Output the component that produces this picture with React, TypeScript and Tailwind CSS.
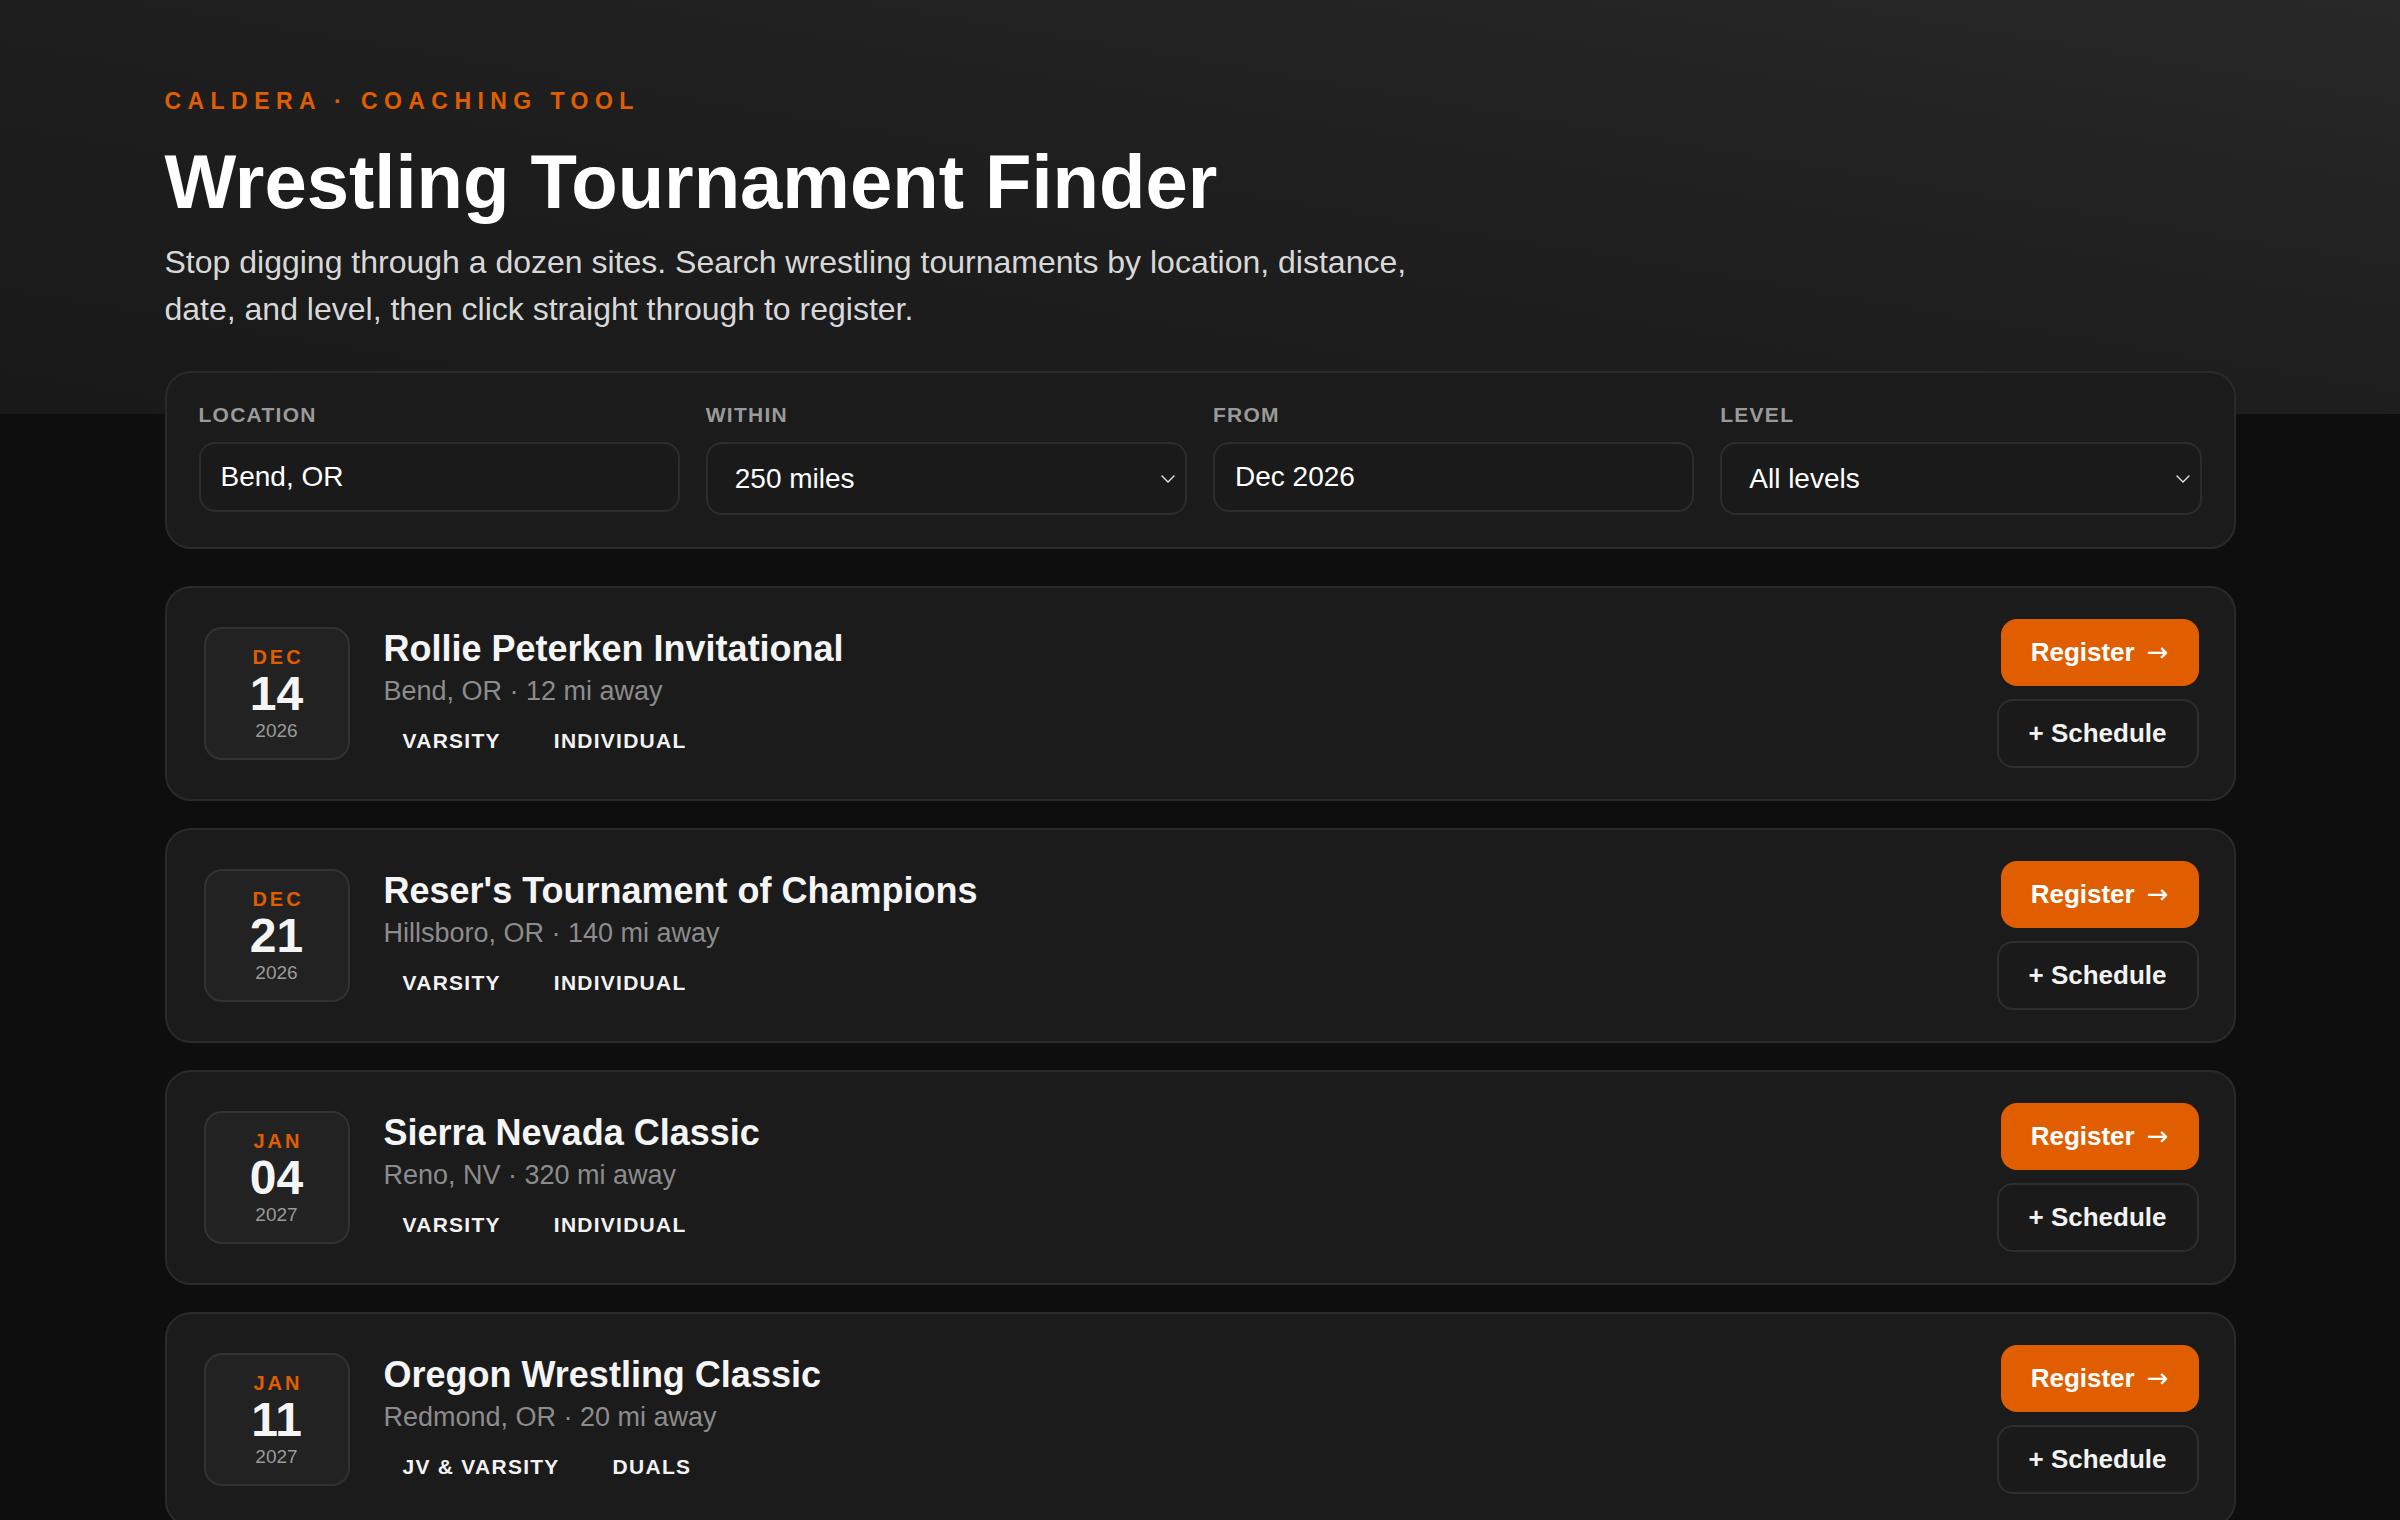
import { useState } from 'react'

type Tournament = {
  month: string
  day: string
  year: string
  name: string
  place: string
  tags: string[]
}

const tournaments: Tournament[] = [
  { month: 'DEC', day: '14', year: '2026', name: 'Rollie Peterken Invitational', place: 'Bend, OR · 12 mi away', tags: ['VARSITY', 'INDIVIDUAL'] },
  { month: 'DEC', day: '21', year: '2026', name: "Reser's Tournament of Champions", place: 'Hillsboro, OR · 140 mi away', tags: ['VARSITY', 'INDIVIDUAL'] },
  { month: 'JAN', day: '04', year: '2027', name: 'Sierra Nevada Classic', place: 'Reno, NV · 320 mi away', tags: ['VARSITY', 'INDIVIDUAL'] },
  { month: 'JAN', day: '11', year: '2027', name: 'Oregon Wrestling Classic', place: 'Redmond, OR · 20 mi away', tags: ['JV & VARSITY', 'DUALS'] },
]

function Chevron() {
  return (
    <svg className="pointer-events-none absolute right-[12px] top-1/2 -translate-y-1/2 w-[14px] h-[9px] text-[#e5e5e5]" viewBox="0 0 14 9" fill="none" stroke="currentColor">
      <path d="M1 1.5l6 6 6-6" strokeWidth="1.4" strokeLinecap="round" strokeLinejoin="round" />
    </svg>
  )
}

function Field({ label, children }: { label: string; children: React.ReactNode }) {
  return (
    <div className="flex flex-col">
      <label className="text-[21px] leading-[21px] font-bold tracking-[0.06em] text-[#9a9a9a] mb-[17px]">{label}</label>
      {children}
    </div>
  )
}

function TournamentCard({ t }: { t: Tournament }) {
  return (
    <div className="flex items-center bg-[#1b1b1b] border-2 border-[#2a2a2a] rounded-[26px] pl-[37px] pr-[35px] py-[31px]">
      {/* Date */}
      <div className="w-[146px] h-[133px] shrink-0 flex flex-col items-center justify-center bg-[#222222] border-2 border-[#323232] rounded-[18px]">
        <div className="text-[20px] leading-[20px] font-bold tracking-[0.15em] pl-[0.15em] text-[#e05e00]">{t.month}</div>
        <div className="text-[48px] leading-[48px] font-bold text-[#f5f5f5] mt-[3px]">{t.day}</div>
        <div className="text-[19px] leading-[19px] text-[#9a9a9a] mt-[3px]">{t.year}</div>
      </div>

      {/* Info */}
      <div className="flex-1 ml-[34px] pb-[4px]">
        <h2 className="text-[36px] leading-[40px] font-bold text-[#f5f5f5]">{t.name}</h2>
        <p className="text-[27px] leading-[40px] text-[#8c8c8c] mt-[2px]">{t.place}</p>
        <div className="flex gap-[15px] mt-[16px]">
          {t.tags.map(tag => (
            <span key={tag} className="px-[19px] text-[21px] leading-[28px] font-bold tracking-[0.06em] text-[#f2f2f2]">
              {tag}
            </span>
          ))}
        </div>
      </div>

      {/* Actions */}
      <div className="flex flex-col items-end gap-[13px]">
        <button className="h-[67px] px-[30px] rounded-[16px] bg-[#e05e00] text-white text-[26px] font-bold flex items-center">
          Register<span className="ml-[12px] font-['DejaVu_Sans',sans-serif] font-normal text-[26px]">→</span>
        </button>
        <button className="h-[69px] px-[30px] rounded-[16px] border-2 border-[#2e2e2e] bg-[#1a1a1a] text-[#f2f2f2] text-[26px] font-bold">
          + Schedule
        </button>
      </div>
    </div>
  )
}

export default function App() {
  const [location, setLocation] = useState('Bend, OR')
  const [within, setWithin] = useState('250')
  const [from, setFrom] = useState('Dec 2026')
  const [level, setLevel] = useState('all')

  return (
    <div className="min-h-screen bg-[#0e0e0e] font-['Liberation_Sans',Arial,sans-serif]">
      {/* Header */}
      <header className="bg-gradient-to-bl from-[#282828] via-[#1e1e1e] to-[#191919] pt-[90px] pb-[81px]">
        <div className="max-w-[2071px] mx-auto">
          <div className="text-[23px] leading-[23px] font-bold tracking-[0.28em] text-[#e05e00]">CALDERA · COACHING TOOL</div>
          <h1 className="text-[76px] leading-[75px] font-bold text-white mt-[31px]">Wrestling Tournament Finder</h1>
          <p className="text-[32px] leading-[47px] text-[#d8d8d8] mt-[20px] max-w-[1290px]">
            Stop digging through a dozen sites. Search wrestling tournaments by location, distance, date, and level, then click straight through to register.
          </p>
        </div>
      </header>

      <main className="max-w-[2071px] mx-auto pb-[60px]">
        {/* Filters */}
        <div className="-mt-[43px] bg-[#1b1b1b] border-2 border-[#2a2a2a] rounded-[26px] px-[32px] pt-[31px] pb-[32px] grid grid-cols-4 gap-x-[26px]">
          <Field label="LOCATION">
            <input
              value={location}
              onChange={e => setLocation(e.target.value)}
              className="h-[70px] px-[20px] bg-[#1a1a1a] border-2 border-[#2c2c2c] rounded-[16px] text-[28px] text-white outline-none"
            />
          </Field>
          <Field label="WITHIN">
            <div className="relative">
              <select
                value={within}
                onChange={e => setWithin(e.target.value)}
                className="w-full h-[73px] pl-[27px] pr-[40px] appearance-none bg-[#1a1a1a] border-2 border-[#2c2c2c] rounded-[16px] text-[28px] text-white outline-none"
              >
                <option value="50">50 miles</option>
                <option value="100">100 miles</option>
                <option value="250">250 miles</option>
                <option value="500">500 miles</option>
              </select>
              <Chevron />
            </div>
          </Field>
          <Field label="FROM">
            <input
              value={from}
              onChange={e => setFrom(e.target.value)}
              className="h-[70px] px-[20px] bg-[#1a1a1a] border-2 border-[#2c2c2c] rounded-[16px] text-[28px] text-white outline-none"
            />
          </Field>
          <Field label="LEVEL">
            <div className="relative">
              <select
                value={level}
                onChange={e => setLevel(e.target.value)}
                className="w-full h-[73px] pl-[27px] pr-[40px] appearance-none bg-[#1a1a1a] border-2 border-[#2c2c2c] rounded-[16px] text-[28px] text-white outline-none"
              >
                <option value="all">All levels</option>
                <option value="varsity">Varsity</option>
                <option value="jv">JV</option>
                <option value="ms">Middle school</option>
              </select>
              <Chevron />
            </div>
          </Field>
        </div>

        {/* Results */}
        <div className="flex flex-col gap-[27px] mt-[37px]">
          {tournaments.map(t => (
            <TournamentCard key={t.name} t={t} />
          ))}
        </div>
      </main>
    </div>
  )
}
